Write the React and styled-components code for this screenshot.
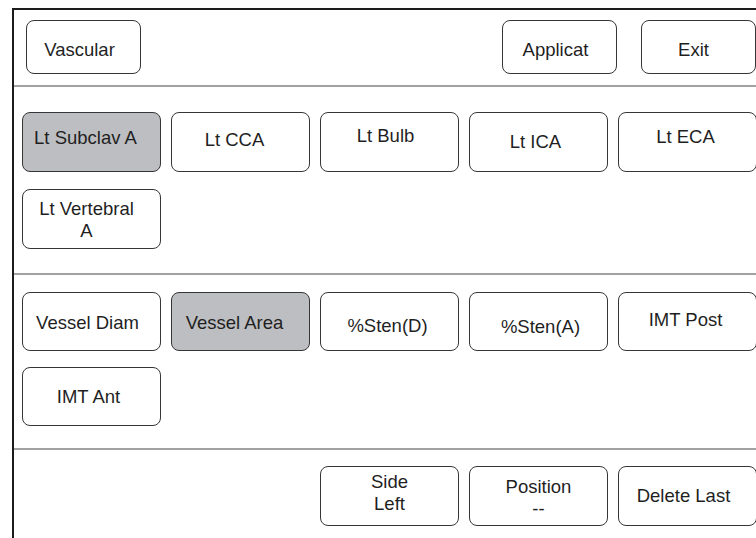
import styled, { createGlobalStyle } from "styled-components";

const GlobalStyle = createGlobalStyle`
  html, body {
    margin: 0;
    padding: 0;
    background: #ffffff;
    overflow: hidden;
  }
  body {
    font-family: "Liberation Sans", Arial, sans-serif;
  }
`;

// dx / dy: the labels on this panel are not quite centred, nudge them
const sites = [
  { label: "Lt Subclav A", active: true, dx: -6, dy: -4 },
  { label: "Lt CCA", dx: -6, dy: -2 },
  { label: "Lt Bulb", dx: -4, dy: -6 },
  { label: "Lt ICA", dx: -3, dy: 0 },
  { label: "Lt ECA", dx: -2, dy: -5 },
  { label: "Lt Vertebral\nA", dx: -5, dy: 1 },
];

const measures = [
  { label: "Vessel Diam", dx: -4, dy: 1 },
  { label: "Vessel Area", active: true, dx: -6, dy: 1 },
  { label: "%Sten(D)", dx: -2, dy: 4 },
  { label: "%Sten(A)", dx: 2, dy: 5 },
  { label: "IMT Post", dx: -2, dy: -2 },
  { label: "IMT Ant", dx: -3 },
];

const tools = [
  { label: "Side\nLeft", col: 3, dy: -3 },
  { label: "Position\n--", dy: 2 },
  { label: "Delete Last", dx: -4 },
];

export default function App() {
  return (
    <>
      <GlobalStyle />
      <Frame>
        <Header>
          <TopButton $dx={-4}>Vascular</TopButton>
          <Spacer />
          <TopButton $dx={-4}>Applicat</TopButton>
          <TopButton $dx={-5}>Exit</TopButton>
        </Header>

        <Section $top={25} $bottom={24} $rowGap={17}>
          {sites.map((s) => (
            <Key key={s.label} $active={s.active} $h={60} $dx={s.dx} $dy={s.dy}>
              {s.label}
            </Key>
          ))}
        </Section>

        <Section $top={17} $bottom={22} $rowGap={16}>
          {measures.map((m) => (
            <Key key={m.label} $active={m.active} $h={59} $dx={m.dx} $dy={m.dy}>
              {m.label}
            </Key>
          ))}
        </Section>

        <Section $top={16} $bottom={12} $rowGap={16} $last>
          {tools.map((t) => (
            <Key key={t.label} $h={60} $col={t.col} $dx={t.dx} $dy={t.dy}>
              {t.label}
            </Key>
          ))}
        </Section>
      </Frame>
    </>
  );
}

const nudge = (p) => {
  const dx = p.$dx || 0;
  const dy = p.$dy || 0;
  return `
    padding-left: ${dx > 0 ? dx * 2 : 0}px;
    padding-right: ${dx < 0 ? -dx * 2 : 0}px;
    padding-top: ${dy > 0 ? dy * 2 : 0}px;
    padding-bottom: ${dy < 0 ? -dy * 2 : 0}px;
  `;
};

const Frame = styled.div`
  margin: 8px 0 0 12px;
  width: 744px;
  min-height: 540px;
  border-left: 2px solid #1c1c1c;
  border-top: 2px solid #1c1c1c;
`;

const Header = styled.div`
  display: flex;
  align-items: flex-start;
  gap: 24px;
  height: 77px;
  padding: 10px 2px 0 12px;
  box-sizing: border-box;
  border-bottom: 2px solid #a2a2a2;
`;

const Spacer = styled.div`
  flex: 1;
`;

const Section = styled.div`
  display: grid;
  grid-template-columns: repeat(5, 139px);
  column-gap: 10px;
  row-gap: ${(p) => p.$rowGap}px;
  padding: ${(p) => p.$top}px 0 ${(p) => p.$bottom}px 8px;
  border-bottom: ${(p) => (p.$last ? "none" : "2px solid #a2a2a2")};
`;

const ButtonBase = styled.div`
  display: flex;
  align-items: center;
  justify-content: center;
  box-sizing: border-box;
  border: 1.5px solid #363636;
  border-radius: 8px;
  color: #1f1f1f;
  font-size: 18.5px;
  line-height: 22px;
  text-align: center;
  white-space: pre-line;
`;

const TopButton = styled(ButtonBase)`
  width: 115px;
  height: 54px;
  background: #ffffff;
  ${nudge}
  padding-top: 6px;
`;

const Key = styled(ButtonBase)`
  height: ${(p) => p.$h}px;
  background: ${(p) => (p.$active ? "#bdbec1" : "#ffffff")};
  grid-column-start: ${(p) => p.$col || "auto"};
  ${nudge}
`;
